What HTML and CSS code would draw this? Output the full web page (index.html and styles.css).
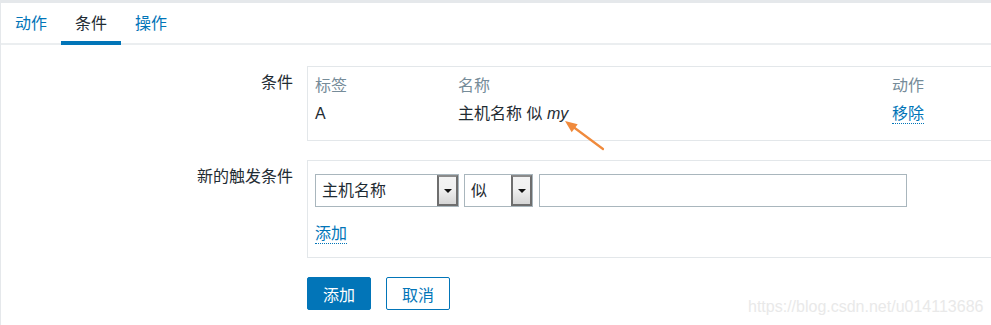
FILE: index.html
```html
<!DOCTYPE html>
<html lang="zh">
<head>
<meta charset="utf-8">
<link rel="stylesheet" href="styles.css">
</head>
<body>
<div class="topband"></div>
<div class="page">
  <div class="tabs">
    <a class="tab">动作</a>
    <a class="tab active">条件</a>
    <a class="tab">操作</a>
  </div>
  <div class="form">
    <div class="row">
      <div class="label">条件</div>
      <div class="box box-cond">
        <div class="trow thead">
          <div class="c1">标签</div>
          <div class="c2">名称</div>
          <div class="c3">动作</div>
        </div>
        <div class="trow">
          <div class="c1 latin">A</div>
          <div class="c2">主机名称 似 <i class="latin">my</i></div>
          <div class="c3"><a class="link">移除</a></div>
        </div>
      </div>
    </div>
    <div class="row">
      <div class="label">新的触发条件</div>
      <div class="box box-new">
        <div class="controls">
          <div class="select sel1"><span class="val">主机名称</span><span class="btn"><span class="tri"></span></span></div>
          <div class="select sel2"><span class="val">似</span><span class="btn"><span class="tri"></span></span></div>
          <div class="input"></div>
        </div>
        <a class="link addlink">添加</a>
      </div>
    </div>
    <div class="row">
      <div class="label"></div>
      <div class="buttons">
        <button class="primary">添加</button>
        <button class="secondary">取消</button>
      </div>
    </div>
  </div>
</div>
<svg class="arrow" width="60" height="50" viewBox="0 0 60 50">
  <line x1="53" y1="44" x2="20" y2="19.5" stroke="#f08a3c" stroke-width="2.2" stroke-linecap="round"/>
  <polygon points="15,16 27.7,19.2 21.7,27.2" fill="#f08a3c"/>
</svg>
<div class="watermark">https://blog.csdn.net/u014113686</div>
</body>
</html>
```
FILE: styles.css
```css
* { box-sizing: border-box; }
html, body { margin: 0; padding: 0; }
body {
  width: 991px;
  height: 325px;
  overflow: hidden;
  position: relative;
  background: #fff;
  font-family: "Liberation Sans", "Noto Sans CJK SC", sans-serif;
  font-size: 16px;
  color: #1f2c33;
}
.topband { height: 3px; background: #e5e8eb; }
.page {
  border-left: 1px solid #e5e8eb;
  height: 322px;
}
.tabs {
  display: flex;
  align-items: flex-start;
  height: 42px;
  border-bottom: 2px solid #ebeef0;
}
.tab {
  display: block;
  width: 60px;
  text-align: center;
  line-height: 20px;
  padding-top: 11px;
  height: 42px;
  color: #0275b8;
  border-bottom: 4px solid transparent;
}
.tab.active {
  color: #1f2c33;
  border-bottom-color: #0275b8;
}
.form { margin-top: 21px; }
.row {
  display: grid;
  grid-template-columns: 292px 700px;
  column-gap: 14px;
  margin-bottom: 19px;
}
.label {
  text-align: right;
  line-height: 20px;
  padding-top: 7px;
}
.box {
  border: 1px solid #e3e7ea;
}
.box-cond { padding: 5px 0 12px 7px; }
.trow { display: flex; line-height: 28px; height: 28px; }
.c1 { width: 143px; }
.c2 { width: 434px; }
.c3 { width: 100px; }
.thead { color: #768c99; }
.latin { font-family: "Liberation Sans", sans-serif; }
.link {
  color: #0275b8;
  border-bottom: 1px dotted #0275b8;
  line-height: 18px;
  display: inline-block;
}
.box-new { padding: 13px 0 13px 7px; }
.controls { display: flex; gap: 5px; height: 33px; }
.select {
  display: flex;
  height: 33px;
  border: 1px solid #a9b6bd;
  background: #fff;
}
.sel1 { width: 144px; }
.sel2 { width: 69px; }
.val {
  flex: 1;
  padding-left: 6px;
  line-height: 31px;
}
.btn {
  width: 21px;
  height: 31px;
  border: 2px solid #6e6e6e;
  border-top-color: #8a8a8a;
  background: linear-gradient(#f3f3f3, #f0f0f0 45%, #d6d6d6);
  position: relative;
}
.tri {
  position: absolute;
  left: 5px;
  top: 12px;
  width: 0;
  height: 0;
  border-left: 4px solid transparent;
  border-right: 4px solid transparent;
  border-top: 4px solid #111;
}
.input {
  width: 368px;
  height: 33px;
  margin-left: 1px;
  border: 1px solid #a9b6bd;
}
.addlink { margin-top: 18px; }
.buttons { display: flex; gap: 15px; }
.buttons button {
  width: 64px;
  height: 33px;
  font-family: "Liberation Sans", "Noto Sans CJK SC", sans-serif;
  font-size: 16px;
  border-radius: 2px;
  border: 1px solid #0275b8;
  padding: 0;
}
.primary { background: #0275b8; color: #fff; }
.secondary { background: #fff; color: #0275b8; }
.arrow {
  position: absolute;
  left: 550px;
  top: 105px;
}
.watermark {
  position: absolute;
  left: 748px;
  top: 297px;
  font-family: "Liberation Sans", sans-serif;
  font-size: 16px;
  line-height: 20px;
  color: #e9e9e9;
}
```
